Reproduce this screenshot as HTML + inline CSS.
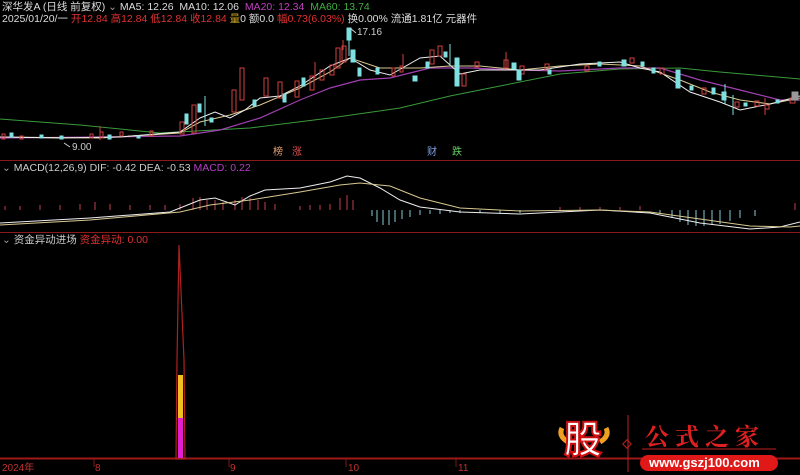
<!DOCTYPE html>
<html><head><meta charset="utf-8"><style>
body{margin:0;background:#000;width:800px;height:475px;overflow:hidden;position:relative;font-family:"Liberation Sans","Noto Sans CJK SC",sans-serif;}
.t{position:absolute;font-size:10px;white-space:nowrap;color:#ccc;line-height:12px}
.h{font-size:10.5px}
</style></head><body>
<svg width="800" height="475" style="position:absolute;left:0;top:0">
<line x1="0" y1="160.5" x2="800" y2="160.5" stroke="#8a1a1a"/>
<line x1="0" y1="232.5" x2="800" y2="232.5" stroke="#8a1a1a"/>
<line x1="0" y1="458.5" x2="800" y2="458.5" stroke="#a01818" stroke-width="2"/>
<polyline fill="none" stroke="#3a9a3a" stroke-width="1" points="0,119 80,125 160,133 250,128 330,118 400,108 450,96 500,86 560,74 620,69 680,68 720,72 800,79"/>
<polyline fill="none" stroke="#a040b0" stroke-width="1.2" points="0,138 100,137 180,136 220,130 260,118 300,100 330,88 360,80 390,78 430,68 470,68 520,70 560,71 620,68 660,68 700,80 740,90 780,100 800,100"/>
<polyline fill="none" stroke="#d8c890" stroke-width="1" points="0,137 100,138 180,133 200,122 230,115 260,105 300,88 330,72 350,58 380,68 420,68 450,66 480,66 520,70 560,66 600,64 640,66 680,80 710,92 740,100 770,104 800,98"/>
<polyline fill="none" stroke="#eee" stroke-width="1" points="0,137 60,138 120,137 180,132 200,118 215,112 230,118 245,110 260,98 280,96 300,86 330,66 350,58 370,70 390,75 420,58 440,56 460,74 480,70 510,70 540,70 580,64 620,62 640,68 660,72 690,92 720,102 740,110 770,104 800,96"/>
<g stroke-width="1">
<g fill="none" stroke="#d04040">
<rect x="2" y="134" width="3" height="5"/><rect x="20" y="136" width="3" height="3"/><rect x="90" y="134" width="3" height="4"/><rect x="100" y="132" width="3" height="6"/><rect x="120" y="132" width="3" height="4"/><rect x="150" y="131" width="3" height="5"/><rect x="180" y="122" width="4" height="12"/><rect x="192" y="105" width="4" height="28"/><rect x="232" y="90" width="4" height="22"/><rect x="240" y="68" width="4" height="32"/><rect x="264" y="78" width="4" height="18"/><rect x="278" y="82" width="4" height="16"/><rect x="295" y="81" width="4" height="16"/><rect x="310" y="76" width="4" height="14"/><rect x="320" y="70" width="4" height="10"/><rect x="330" y="65" width="4" height="10"/><rect x="336" y="48" width="4" height="20"/><rect x="342" y="46" width="4" height="16"/><rect x="392" y="68" width="3" height="8"/><rect x="400" y="66" width="3" height="6"/><rect x="430" y="50" width="4" height="14"/><rect x="438" y="46" width="4" height="10"/><rect x="462" y="74" width="4" height="12"/><rect x="475" y="62" width="4" height="5"/><rect x="504" y="60" width="4" height="8"/><rect x="520" y="66" width="4" height="8"/><rect x="545" y="64" width="4" height="6"/><rect x="585" y="66" width="4" height="5"/><rect x="630" y="58" width="4" height="5"/><rect x="660" y="68" width="4" height="6"/><rect x="702" y="88" width="4" height="6"/><rect x="735" y="102" width="4" height="5"/><rect x="755" y="101" width="4" height="5"/><rect x="765" y="105" width="4" height="4"/><rect x="790" y="98" width="5" height="5"/>
</g>
<g fill="#7ee0e0" stroke="#7ee0e0">
<rect x="10" y="133" width="3" height="4"/><rect x="40" y="135" width="3" height="3"/><rect x="60" y="136" width="3" height="3"/><rect x="108" y="135" width="3" height="4"/><rect x="137" y="136" width="3" height="2"/><rect x="185" y="114" width="3" height="10"/><rect x="198" y="104" width="3" height="8"/><rect x="210" y="118" width="3" height="4"/><rect x="253" y="100" width="3" height="6"/><rect x="283" y="94" width="3" height="8"/><rect x="302" y="78" width="3" height="8"/><rect x="347" y="28" width="4" height="12"/><rect x="351" y="50" width="4" height="12"/><rect x="358" y="68" width="3" height="8"/><rect x="376" y="68" width="3" height="6"/><rect x="413" y="76" width="4" height="5"/><rect x="426" y="62" width="3" height="6"/><rect x="444" y="52" width="3" height="5"/><rect x="455" y="58" width="4" height="28"/><rect x="512" y="63" width="4" height="6"/><rect x="517" y="70" width="4" height="10"/><rect x="548" y="70" width="3" height="4"/><rect x="598" y="62" width="3" height="4"/><rect x="622" y="60" width="4" height="6"/><rect x="641" y="62" width="3" height="4"/><rect x="652" y="68" width="3" height="5"/><rect x="676" y="70" width="4" height="18"/><rect x="690" y="86" width="3" height="4"/><rect x="712" y="88" width="3" height="6"/><rect x="722" y="92" width="4" height="8"/><rect x="744" y="103" width="3" height="3"/><rect x="776" y="100" width="3" height="3"/><rect x="792" y="92" width="6" height="8" fill="#999" stroke="#999"/>
</g>
<g stroke="#7ee0e0"><line x1="205" y1="96" x2="205" y2="126"/><line x1="349" y1="28" x2="349" y2="56"/><line x1="450" y1="44" x2="450" y2="66"/><line x1="725" y1="84" x2="725" y2="104"/><line x1="733" y1="95" x2="733" y2="115"/></g>
<g stroke="#d04040"><line x1="100" y1="126" x2="100" y2="140"/><line x1="315" y1="62" x2="315" y2="78"/><line x1="343" y1="40" x2="343" y2="50"/><line x1="403" y1="54" x2="403" y2="70"/><line x1="506" y1="52" x2="506" y2="68"/><line x1="765" y1="98" x2="765" y2="115"/></g>
</g>
<line x1="350" y1="28" x2="356" y2="33" stroke="#ccc"/>
<line x1="64" y1="143" x2="70" y2="147" stroke="#ccc"/>
<g stroke="#c04050" stroke-width="1">
<line x1="5" y1="206" x2="5" y2="210"/><line x1="20" y1="206" x2="20" y2="210"/><line x1="40" y1="205" x2="40" y2="210"/><line x1="60" y1="205" x2="60" y2="210"/><line x1="80" y1="204" x2="80" y2="210"/><line x1="95" y1="202" x2="95" y2="210"/><line x1="110" y1="204" x2="110" y2="210"/><line x1="130" y1="205" x2="130" y2="210"/><line x1="150" y1="205" x2="150" y2="210"/><line x1="165" y1="205" x2="165" y2="210"/><line x1="180" y1="204" x2="180" y2="210"/><line x1="193" y1="198" x2="193" y2="210"/><line x1="200" y1="197" x2="200" y2="210"/><line x1="207" y1="200" x2="207" y2="210"/><line x1="215" y1="200" x2="215" y2="210"/><line x1="223" y1="202" x2="223" y2="210"/><line x1="235" y1="200" x2="235" y2="210"/><line x1="242" y1="197" x2="242" y2="210"/><line x1="250" y1="198" x2="250" y2="210"/><line x1="258" y1="200" x2="258" y2="210"/><line x1="265" y1="202" x2="265" y2="210"/><line x1="275" y1="204" x2="275" y2="210"/><line x1="300" y1="206" x2="300" y2="210"/><line x1="310" y1="205" x2="310" y2="210"/><line x1="320" y1="205" x2="320" y2="210"/><line x1="330" y1="204" x2="330" y2="210"/><line x1="340" y1="198" x2="340" y2="210"/><line x1="347" y1="195" x2="347" y2="210"/><line x1="353" y1="200" x2="353" y2="210"/>
<line x1="560" y1="207" x2="560" y2="210"/><line x1="580" y1="207" x2="580" y2="210"/><line x1="600" y1="207" x2="600" y2="210"/><line x1="620" y1="207" x2="620" y2="210"/><line x1="640" y1="206" x2="640" y2="210"/><line x1="795" y1="203" x2="795" y2="210"/>
</g>
<g stroke="#8ac8d8" stroke-width="1">
<line x1="372" y1="210" x2="372" y2="216"/><line x1="377" y1="210" x2="377" y2="222"/><line x1="383" y1="210" x2="383" y2="225"/><line x1="389" y1="210" x2="389" y2="225"/><line x1="395" y1="210" x2="395" y2="222"/><line x1="402" y1="210" x2="402" y2="219"/><line x1="410" y1="210" x2="410" y2="217"/><line x1="420" y1="210" x2="420" y2="215"/><line x1="430" y1="210" x2="430" y2="214"/><line x1="440" y1="210" x2="440" y2="214"/><line x1="450" y1="210" x2="450" y2="213"/><line x1="460" y1="210" x2="460" y2="213"/><line x1="480" y1="210" x2="480" y2="213"/><line x1="500" y1="210" x2="500" y2="213"/><line x1="520" y1="210" x2="520" y2="213"/>
<line x1="660" y1="210" x2="660" y2="214"/><line x1="672" y1="210" x2="672" y2="218"/><line x1="680" y1="210" x2="680" y2="222"/><line x1="688" y1="210" x2="688" y2="225"/><line x1="696" y1="210" x2="696" y2="226"/><line x1="704" y1="210" x2="704" y2="226"/><line x1="712" y1="210" x2="712" y2="225"/><line x1="720" y1="210" x2="720" y2="224"/><line x1="730" y1="210" x2="730" y2="221"/><line x1="740" y1="210" x2="740" y2="218"/><line x1="755" y1="210" x2="755" y2="216"/>
</g>
<polyline fill="none" stroke="#eee" points="0,223 90,218 170,212 200,200 215,198 235,205 250,196 265,190 300,188 330,182 347,176 360,178 380,188 400,200 420,207 460,212 520,214 600,210 650,213 700,223 750,229 780,227 800,222"/>
<polyline fill="none" stroke="#d8c890" points="0,225 90,220 180,212 210,205 250,200 300,192 340,185 360,183 390,186 420,198 460,208 520,211 600,210 650,212 700,219 750,226 790,227 800,226"/>
<polygon points="179,245 177,360 176,459 185,459 184,360" fill="none" stroke="#b02020" stroke-width="1.2"/>
<rect x="178" y="375" width="5" height="43" fill="#f0c020"/>
<rect x="178" y="418" width="5" height="40" fill="#e020d0"/>
<g stroke="#7a1a1a"><line x1="94" y1="459" x2="94" y2="467"/><line x1="229" y1="459" x2="229" y2="467"/><line x1="346" y1="459" x2="346" y2="467"/><line x1="456" y1="459" x2="456" y2="467"/></g>
<line x1="628" y1="415" x2="628" y2="472" stroke="#c02020"/>
<rect x="624" y="441" width="6" height="6" transform="rotate(45 627 444)" fill="none" stroke="#c02020"/>
<line x1="642" y1="449" x2="776" y2="449" stroke="#c02020"/>
<rect x="640" y="455" width="138" height="16" rx="8" fill="#e01818"/>
<path d="M562,428 q-4,8 6,14 M606,428 q4,8 -6,14" stroke="#f0a020" stroke-width="5" fill="none"/>
</svg>
<div class="t h" style="left:2px;top:1px;color:#ddd">深华发A (日线 前复权) <span style="color:#999">⌄</span> MA5: 12.26 &nbsp;MA10: 12.06 &nbsp;<span style="color:#c040c0">MA20: 12.34</span> &nbsp;<span style="color:#40b040">MA60: 13.74</span></div>
<div class="t h" style="left:2px;top:13px;color:#ddd">2025/01/20/一 <span style="color:#e03030">开12.84 高12.84 低12.84 收12.84</span> <span style="color:#c0a020">量</span>0 额0.0 <span style="color:#e03030">幅0.73(6.03%)</span> 换0.00% 流通1.81亿 元器件</div>
<div class="t" style="left:357px;top:27px">17.16</div>
<div class="t" style="left:72px;top:142px">9.00</div>
<div class="t" style="left:273px;top:147px;color:#e0a070">榜</div>
<div class="t" style="left:292px;top:147px;color:#e05050">涨</div>
<div class="t" style="left:427px;top:147px;color:#80a0e0">财</div>
<div class="t" style="left:452px;top:147px;color:#60d060">跌</div>
<div class="t h" style="left:2px;top:162px;color:#ccc"><span style="color:#999">⌄</span> MACD(12,26,9) DIF: -0.42 DEA: -0.53 <span style="color:#b040c0">MACD: 0.22</span></div>
<div class="t h" style="left:2px;top:234px;color:#ccc"><span style="color:#999">⌄</span> 资金异动进场 <span style="color:#e03030">资金异动: 0.00</span></div>
<div class="t" style="left:2px;top:463px;color:#c03030">2024年</div>
<div class="t" style="left:95px;top:463px;color:#c03030">8</div>
<div class="t" style="left:230px;top:463px;color:#c03030">9</div>
<div class="t" style="left:348px;top:463px;color:#c03030">10</div>
<div class="t" style="left:458px;top:463px;color:#c03030">11</div>
<div class="t" style="left:564px;top:418px;font-size:38px;line-height:46px;color:#fff;font-weight:bold;-webkit-text-stroke:2px #d01010">股</div>
<div class="t" style="left:645px;top:422px;font-size:24px;line-height:26px;color:#e02020;letter-spacing:6px;font-family:'Noto Serif CJK SC',serif;font-weight:bold">公式之家</div>
<div class="t" style="left:649px;top:456px;font-size:13px;line-height:14px;color:#fff;font-weight:bold">www.gszj100.com</div>
</body></html>
